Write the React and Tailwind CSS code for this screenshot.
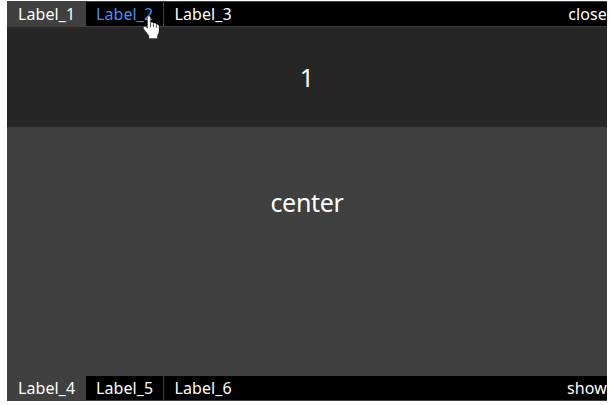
function Tab({ label, active, hovered, divider }) {
  const tone = active ? 'bg-[#404040] text-white' : hovered ? 'bg-black text-[#4590f0]' : 'bg-black text-white';
  const edge = divider ? 'border-r border-[#404040]' : '';
  const size = active ? 'w-[79px] pl-[11px]' : divider ? 'w-[78px] pl-[10px]' : 'w-[78px] pl-[10.5px]';
  return <div className={`shrink-0 whitespace-nowrap tracking-[0.1px] ${size} ${tone} ${edge}`}>{label}</div>;
}

function TabBar({ labels, hovered, action, className }) {
  return (
    <div className={`flex shrink-0 border-b border-[#404040] bg-black text-[16px] leading-[24px] text-white ${className}`}>
      <Tab label={labels[0]} active />
      <Tab label={labels[1]} hovered={hovered === 1} divider />
      <Tab label={labels[2]} />
      <div className="-mr-px ml-auto pr-px tracking-[0.1px]">{action}</div>
    </div>
  );
}

function HandCursor() {
  return (
    <svg className="absolute left-[136px] top-[14px]" width="18" height="25" viewBox="0 0 18 25">
      <path
        d="M4.5 2.5C4.5.5 7.4.5 7.4 2.5V7.8C8.2 6.9 10 7.2 10.3 8.4C11.2 7.7 12.8 8.1 13.2 9.4C14.3 8.8 16 9.5 16 11.2V16C16 18.3 14.8 19.3 14.3 20.8V23.4H5.9V20.8C4.6 18.5 2.3 16.4.8 13.9C-.3 12 1.5 10.6 3 11.9L4.5 13.4Z"
        fill="white"
        stroke="black"
        strokeWidth="0.3"
      />
      <path d="M7.5 8V12.3M10.4 8.8V12.3M13.3 9.8V12.8" stroke="black" strokeWidth="0.7" />
    </svg>
  );
}

export default function App() {
  return (
    <div className="h-[405px] w-[615px] overflow-hidden bg-white pl-[7px] pt-px font-['Noto_Sans',sans-serif]">
      <div className="relative flex h-[400px] w-[600px] flex-col">
        <TabBar
          labels={['Label_1', 'Label_2', 'Label_3']}
          hovered={1}
          action="close"
          className="h-[26px] border-t"
        />
        <div className="h-[100px] shrink-0 bg-[#262626] text-center text-[25px] leading-[100px] text-white">1</div>
        <div className="grow bg-[#404040] text-center text-[25px] leading-[150px] tracking-[-0.3px] text-white">
          center
        </div>
        <TabBar labels={['Label_4', 'Label_5', 'Label_6']} action="show" className="h-[25px]" />
        <HandCursor />
      </div>
    </div>
  );
}
